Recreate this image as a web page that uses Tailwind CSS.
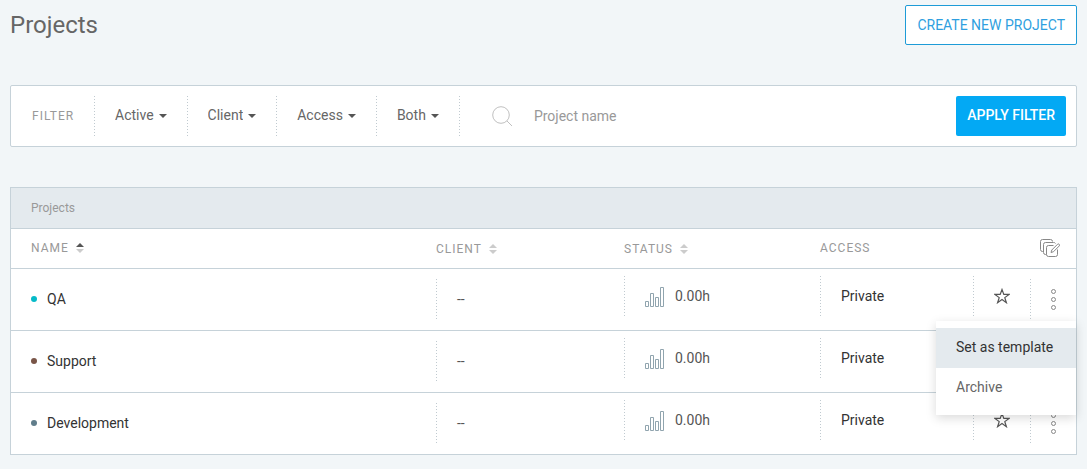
<!DOCTYPE html>
<html lang="en">
  <head>
    <meta charset="UTF-8" />
    <meta name="viewport" content="width=device-width, initial-scale=1.0" />
    <title>Projects</title>
    <script src="https://cdn.jsdelivr.net/npm/@tailwindcss/browser@4"></script>
    <style>
      body {
        font-family: Roboto, "Liberation Sans", sans-serif;
      }
      /* sparse dotted divider on the left edge of a cell */
      .dots {
        background: repeating-linear-gradient(#c0cad0 0 1px, transparent 1px 3px) left top / 1px 100% no-repeat;
      }
    </style>
  </head>
  <body class="min-h-screen bg-[#f2f6f8] px-2.5 pt-[5px] text-sm text-[#333]">
    <!-- icons -->
    <svg class="hidden">
      <symbol id="bars" viewBox="0 0 20 22">
        <path d="M.5 16.5h3v5h-3zM5.5 8.5h3v13h-3zM10.5 12.5h3v9h-3zM15.5 2.5h3v19h-3z" fill="none" stroke="#90a4ae" />
      </symbol>
      <symbol id="star" viewBox="0 0 16 16">
        <path d="M8 1.500L9.800 6.400H15L10.800 9.600L12.400 14.700L8 11.600L3.600 14.700L5.200 9.600L1 6.400H6.200z" fill="none" stroke="#555" stroke-width="1.200" />
      </symbol>
      <symbol id="more" viewBox="0 0 6 22">
        <g fill="none" stroke="#888">
          <circle cx="3.500" cy="3.500" r="2" />
          <circle cx="3.500" cy="11.500" r="2" />
          <circle cx="3.500" cy="19.500" r="2" />
        </g>
      </symbol>
      <symbol id="caret" viewBox="0 0 8 4">
        <path d="M0 0h8L4 4z" fill="#555" />
      </symbol>
      <symbol id="sort" viewBox="0 0 8 10">
        <path d="M0 4h8L4 0z" />
        <path d="M0 6h8l-4 4z" fill="#ccc" />
      </symbol>
    </svg>

    <header class="flex h-10 items-center justify-between">
      <h1 class="text-2xl text-[#666]">Projects</h1>
      <button class="h-10 rounded-xs border border-[#1e9bd7] bg-white px-[11px] text-[#2f9fe0]">CREATE NEW PROJECT</button>
    </header>

    <form class="mt-10 flex items-center rounded-xs border border-[#c6d2d9] bg-white p-2.5 text-[#666]">
      <span class="w-[73px] pl-[11px] text-xs tracking-[1px] text-[#999]">FILTER</span>
      <div class="dots flex h-10 items-center gap-[5px] pr-5 pl-[21px]">
        <select aria-label="Status" class="field-sizing-content appearance-none pb-0.5"><option>Active</option><option>Archived</option></select>
        <svg class="h-1 w-2"><use href="#caret" /></svg>
      </div>
      <div class="dots flex h-10 items-center gap-[5px] pr-5 pl-[21px]">
        <select aria-label="Client" class="field-sizing-content appearance-none pb-0.5"><option>Client</option></select>
        <svg class="h-1 w-2"><use href="#caret" /></svg>
      </div>
      <div class="dots flex h-10 items-center gap-[5px] pr-5 pl-[21px]">
        <select aria-label="Access" class="field-sizing-content appearance-none pb-0.5"><option>Access</option></select>
        <svg class="h-1 w-2"><use href="#caret" /></svg>
      </div>
      <div class="dots flex h-10 items-center gap-[5px] pr-5 pl-[21px]">
        <select aria-label="Template" class="field-sizing-content appearance-none pb-0.5"><option>Both</option></select>
        <svg class="h-1 w-2"><use href="#caret" /></svg>
      </div>
      <div class="dots flex h-10 flex-1 items-center gap-[22px] pl-[33px]">
        <svg class="h-5 w-5" viewBox="0 0 20 20" fill="none" stroke="#c0c0c0">
          <circle cx="9" cy="9" r="8.300" />
          <path d="M15 15l5 5" />
        </svg>
        <input type="text" aria-label="Project name" placeholder="Project name" class="min-w-0 flex-1 outline-none placeholder:text-[#999]" />
      </div>
      <button type="button" class="h-10 rounded-xs bg-[#03a9f4] px-[11px] pb-0.5 font-medium text-white">APPLY FILTER</button>
    </form>

    <section class="mt-10 border border-[#c6d2d9] bg-white">
      <h2 class="flex h-10 items-center bg-[#e4eaee] px-5 text-xs text-[#999]">Projects</h2>
      <table class="w-full table-fixed border-collapse text-left">
        <thead>
          <tr class="h-10 border-t border-[#c6d2d9] text-xs tracking-[1px] text-[#999]">
            <th class="pb-0.5 pl-5 font-normal">
              <button class="flex items-center gap-[7px] tracking-[1px]">NAME <svg class="h-2.5 w-2 fill-[#555]"><use href="#sort" /></svg></button>
            </th>
            <th class="w-[188px] font-normal">
              <button class="flex items-center gap-[7px] tracking-[1px]">CLIENT <svg class="h-2.5 w-2 fill-[#ccc]"><use href="#sort" /></svg></button>
            </th>
            <th class="w-[196px] font-normal">
              <button class="flex items-center gap-[7px] tracking-[1px]">STATUS <svg class="h-2.5 w-2 fill-[#ccc]"><use href="#sort" /></svg></button>
            </th>
            <th class="w-[153px] pb-0.5 font-normal">ACCESS</th>
            <th class="w-[57px]"></th>
            <th class="w-[46px] pl-2.5">
              <button aria-label="Bulk edit" class="flex">
                <svg class="h-5 w-5" viewBox="0 0 20 20" fill="none" stroke="#888">
                  <path d="M3.500 12.500h-1a2 2 0 0 1-2-2v-8a2 2 0 0 1 2-2h8a2 2 0 0 1 2 2" />
                  <path d="M6.500 15.500h-1a2 2 0 0 1-2-2v-8a2 2 0 0 1 2-2h8a2 2 0 0 1 2 1" />
                  <path d="M13.500 6.500h-5a2 2 0 0 0-2 2v7a2 2 0 0 0 2 2h7a2 2 0 0 0 2-2v-5" />
                  <path d="M11 13.500l.8-2.500 5.700-5.700a1.200 1.200 0 0 1 1.700 1.700l-5.700 5.700z" />
                </svg>
              </button>
            </th>
          </tr>
        </thead>
        <tbody>
          <tr class="h-[62px] border-t border-[#c6d2d9] align-top">
            <td class="pt-2.5"><div class="flex h-10 items-center gap-2.5 pl-5"><span class="h-1.5 w-1.5 rounded-full bg-[#06bac8]"></span>QA</div></td>
            <td class="pt-2.5"><div class="dots flex h-10 items-center pl-[21px] text-[#555]">--</div></td>
            <td class="pt-[7px]"><div class="dots flex h-10 items-center gap-2.5 pl-[21px] text-[#555]"><svg class="h-[22px] w-5"><use href="#bars" /></svg>0.00h</div></td>
            <td class="pt-[7px]"><div class="dots flex h-10 items-center pl-[21px]">Private</div></td>
            <td class="pt-[7px]"><div class="dots flex h-10 items-center justify-center"><button aria-label="Favorite"><svg class="h-4 w-4"><use href="#star" /></svg></button></div></td>
            <td class="pt-2.5">
              <div class="dots relative flex h-10 items-center justify-center">
                <button aria-label="More"><svg class="h-[22px] w-1.5"><use href="#more" /></svg></button>
                <div class="absolute top-[42px] right-0 z-10 w-[140px] bg-white py-[7px] shadow-[0_3px_10px_rgba(0,0,0,0.15)]">
                  <button class="block h-10 w-full bg-[#e4eaee] px-5 pb-0.5 text-left text-[#333]">Set as template</button>
                  <button class="block h-10 w-full px-5 pb-0.5 text-left text-[#666]">Archive</button>
                </div>
              </div>
            </td>
          </tr>
          <tr class="h-[62px] border-t border-[#c6d2d9] align-top">
            <td class="pt-2.5"><div class="flex h-10 items-center gap-2.5 pl-5"><span class="h-1.5 w-1.5 rounded-full bg-[#795548]"></span>Support</div></td>
            <td class="pt-2.5"><div class="dots flex h-10 items-center pl-[21px] text-[#555]">--</div></td>
            <td class="pt-[7px]"><div class="dots flex h-10 items-center gap-2.5 pl-[21px] text-[#555]"><svg class="h-[22px] w-5"><use href="#bars" /></svg>0.00h</div></td>
            <td class="pt-[7px]"><div class="dots flex h-10 items-center pl-[21px]">Private</div></td>
            <td class="pt-[7px]"><div class="dots flex h-10 items-center justify-center"><button aria-label="Favorite"><svg class="h-4 w-4"><use href="#star" /></svg></button></div></td>
            <td class="pt-2.5"><div class="dots flex h-10 items-center justify-center"><button aria-label="More"><svg class="h-[22px] w-1.5"><use href="#more" /></svg></button></div></td>
          </tr>
          <tr class="h-[61px] border-t border-[#c6d2d9] align-top">
            <td class="pt-2.5"><div class="flex h-10 items-center gap-2.5 pl-5"><span class="h-1.5 w-1.5 rounded-full bg-[#607d8b]"></span>Development</div></td>
            <td class="pt-2.5"><div class="dots flex h-10 items-center pl-[21px] text-[#555]">--</div></td>
            <td class="pt-[7px]"><div class="dots flex h-10 items-center gap-2.5 pl-[21px] text-[#555]"><svg class="h-[22px] w-5"><use href="#bars" /></svg>0.00h</div></td>
            <td class="pt-[7px]"><div class="dots flex h-10 items-center pl-[21px]">Private</div></td>
            <td class="pt-[7px]"><div class="dots flex h-10 items-center justify-center"><button aria-label="Favorite"><svg class="h-4 w-4"><use href="#star" /></svg></button></div></td>
            <td class="pt-2.5"><div class="dots flex h-10 items-center justify-center"><button aria-label="More"><svg class="h-[22px] w-1.5"><use href="#more" /></svg></button></div></td>
          </tr>
        </tbody>
      </table>
    </section>
  </body>
</html>
